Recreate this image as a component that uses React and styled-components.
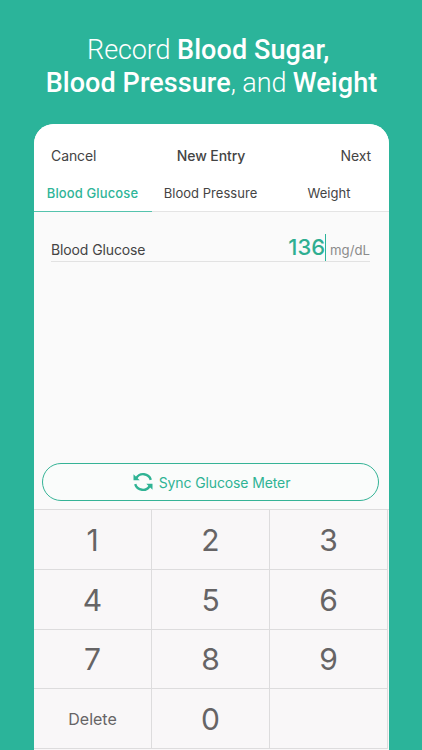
import React from 'react'
import styled, { createGlobalStyle } from 'styled-components'

const GlobalStyle = createGlobalStyle`
    * {
      box-sizing: border-box;
    }
    body {
      margin: 0;
      background-color: #2bb49a;
    }
`

const Container = styled.div`
    height: 750px;
    padding: 34px 33px 0 34px;
    overflow: hidden;
    background-color: #2bb49a;
    font-family: Inter, 'Liberation Sans', sans-serif;
    color: #444444;
`

const Title = styled.h1`
    height: 90px;
    margin: 0 -20px;
    font-family: Roboto, sans-serif;
    font-size: 27px;
    font-weight: 300;
    line-height: 33px;
    letter-spacing: -0.1px;
    text-align: center;
    white-space: nowrap;
    color: white;
`

const Strong = styled.span`
    font-weight: 500;
    letter-spacing: 0.08px;
`

const Card = styled.div`
    height: 626px;
    display: flex;
    flex-direction: column;
    overflow: hidden;
    border-radius: 20px 20px 0 0;
    background-color: #fafafa;
`

const Header = styled.div`
    height: 49px;
    padding: 13px 18px 0 17px;
    display: grid;
    grid-template-columns: 1fr auto 1fr;
    align-items: center;
    background-color: white;
`

const HeaderText = styled.span`
    font-size: 14px;
    font-weight: ${(props) => (props.$bold ? 500 : 400)};
    text-align: ${(props) => props.$align || 'left'};
    letter-spacing: -0.1px;
`

const Tabs = styled.div`
    height: 39px;
    display: grid;
    grid-template-columns: 118px 118px 1fr;
    background-color: white;
`

const Tab = styled.div`
    padding: 1px 1px 0 0;
    display: flex;
    align-items: center;
    justify-content: center;
    border-bottom: 1px solid ${(props) => (props.$active ? '#55c3ad' : '#e4e4e4')};
    font-size: 13px;
    font-weight: ${(props) => (props.$active ? 500 : 400)};
    letter-spacing: ${(props) => (props.$active ? '0.12px' : '0.03px')};
    color: ${(props) => (props.$active ? '#2fb598' : '#444444')};
`

const Content = styled.div`
    flex: 1;
    padding: 22px 10px 8px 8px;
    display: flex;
    flex-direction: column;
    justify-content: space-between;
`

const Field = styled.div`
    height: 28px;
    margin: 0 9px;
    display: flex;
    align-items: baseline;
    border-bottom: 1px solid #e2e2e2;
    line-height: 28px;
`

const Label = styled.span`
    flex: 1;
    font-size: 14px;
    letter-spacing: -0.12px;
`

const Value = styled.span`
    height: 27px;
    border-right: 1px solid #2bb49a;
    font-size: 22px;
    font-weight: 500;
    line-height: 27px;
    color: #2fae91;
`

const Unit = styled.span`
    margin-left: 4px;
    font-size: 13.2px;
    color: #8b8b8b;
`

const SyncButton = styled.button`
    height: 38px;
    padding: 0 0 0 2px;
    display: flex;
    align-items: center;
    justify-content: center;
    gap: 6px;
    border: 1px solid #35b396;
    border-radius: 19px;
    background-color: #fafcfb;
    font-family: inherit;
    font-size: 14px;
    letter-spacing: -0.12px;
    color: #2fb394;
    cursor: pointer;
`

const Keypad = styled.div`
    height: 241px;
    display: grid;
    grid-template-columns: 118px 118px 118px;
    grid-template-rows: 60px 60px 59px 60px;
    border-top: 1px solid #dddcdd;
    background-color: #f9f7f8;
`

const Key = styled.div`
    display: flex;
    align-items: center;
    justify-content: center;
    border-right: 1px solid #dddcdd;
    border-bottom: 1px solid #dddcdd;
    font-size: ${(props) => (props.$small ? '16px' : '30px')};
    color: #666465;
`

const SyncIcon = () => (
  <svg width="20" height="20" viewBox="0 0 20 20" fill="none">
    <path d="M3.2 6.2A8 8 0 0 1 17.8 7.8" stroke="#2fb394" strokeWidth="2.4" />
    <path d="M16.8 13.8A8 8 0 0 1 2.2 12.2" stroke="#2fb394" strokeWidth="2.4" />
    <path d="M.5 2.2V8.2H6.7Z" fill="#2fb394" />
    <path d="M19.5 17.8V11.8H13.3Z" fill="#2fb394" />
  </svg>
)

const keys = ['1', '2', '3', '4', '5', '6', '7', '8', '9', 'Delete', '0', '']

const App = () => {
  return (
    <Container>
      <GlobalStyle />
      <Title>
        Record <Strong>Blood Sugar,</Strong>&nbsp;
        <br />
        <Strong>Blood Pressure</Strong>, and <Strong>Weight</Strong>
      </Title>
      <Card>
        <Header>
          <HeaderText>Cancel</HeaderText>
          <HeaderText $bold>New Entry</HeaderText>
          <HeaderText $align="right">Next</HeaderText>
        </Header>
        <Tabs>
          <Tab $active>Blood Glucose</Tab>
          <Tab>Blood Pressure</Tab>
          <Tab>Weight</Tab>
        </Tabs>
        <Content>
          <Field>
            <Label>Blood Glucose</Label>
            <Value>136</Value>
            <Unit>mg/dL</Unit>
          </Field>
          <SyncButton>
            <SyncIcon />
            Sync Glucose Meter
          </SyncButton>
        </Content>
        <Keypad>
          {keys.map((key) => (
            <Key key={key} $small={key === 'Delete'}>{key}</Key>
          ))}
        </Keypad>
      </Card>
    </Container>
  )
}

export default App
